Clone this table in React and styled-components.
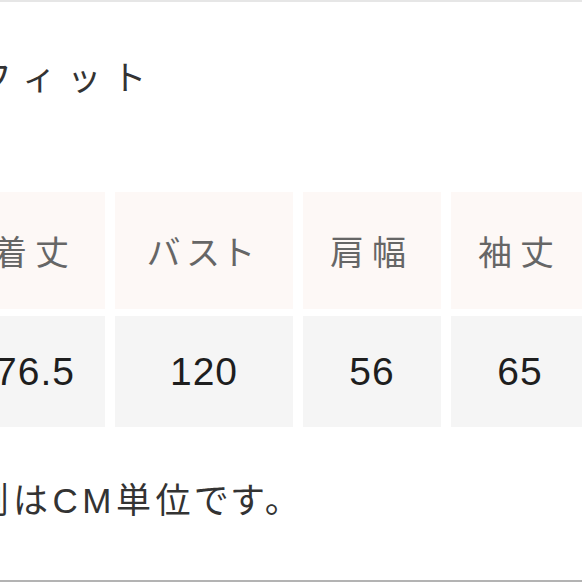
import React from 'react';
import styled, { createGlobalStyle } from 'styled-components';

const GlobalStyle = createGlobalStyle`
  html, body {
    margin: 0;
    padding: 0;
    background: #fff;
  }
  body {
    font-family: 'Noto Sans CJK JP', 'Noto Sans', sans-serif;
  }
`;

const Page = styled.div`
  width: 582px;
  height: 582px;
  box-sizing: border-box;
  overflow: hidden;
  border-top: 2px solid #e6e6e6;
  border-bottom: 2px solid #b3b3b3;
  display: flex;
  flex-direction: column;
`;

const Heading = styled.div`
  margin: 54px 0 0 -22px;
  font-size: 34px;
  line-height: 40px;
  letter-spacing: 11px;
  color: #333;
  white-space: nowrap;
`;

const SizeTable = styled.div`
  margin: 96px 0 0 -35px;
  display: grid;
  grid-template-columns: 140px 178px 138px 138px;
  grid-template-rows: 117px 111px;
  column-gap: 10px;
  row-gap: 7px;
`;

const HeadCell = styled.div`
  background: #fdf8f6;
  display: flex;
  align-items: center;
  justify-content: center;
  font-size: 34px;
  font-feature-settings: 'palt';
  letter-spacing: 8px;
  color: #666;
`;

const ValueCell = styled.div`
  background: #f5f5f5;
  display: flex;
  align-items: center;
  justify-content: center;
  font-family: 'Liberation Sans', Arial, sans-serif;
  font-size: 39px;
  letter-spacing: 1px;
  color: #1e1e1e;
`;

const Note = styled.div`
  margin: 54px 0 0 -66px;
  font-family: 'Liberation Sans', 'Noto Sans CJK JP', sans-serif;
  font-size: 35px;
  line-height: 40px;
  font-feature-settings: 'palt';
  letter-spacing: 4.5px;
  color: #333;
  white-space: nowrap;
`;

const heads = ['着丈', 'バスト', '肩幅', '袖丈'];
const values = ['76.5', '120', '56', '65'];

export default function App() {
  return (
    <Page>
      <GlobalStyle />
      <Heading>フィット</Heading>
      <SizeTable>
        {heads.map((h) => (
          <HeadCell key={h}>{h}</HeadCell>
        ))}
        {values.map((v) => (
          <ValueCell key={v}>{v}</ValueCell>
        ))}
      </SizeTable>
      <Note>計測はCM単位です。</Note>
    </Page>
  );
}
